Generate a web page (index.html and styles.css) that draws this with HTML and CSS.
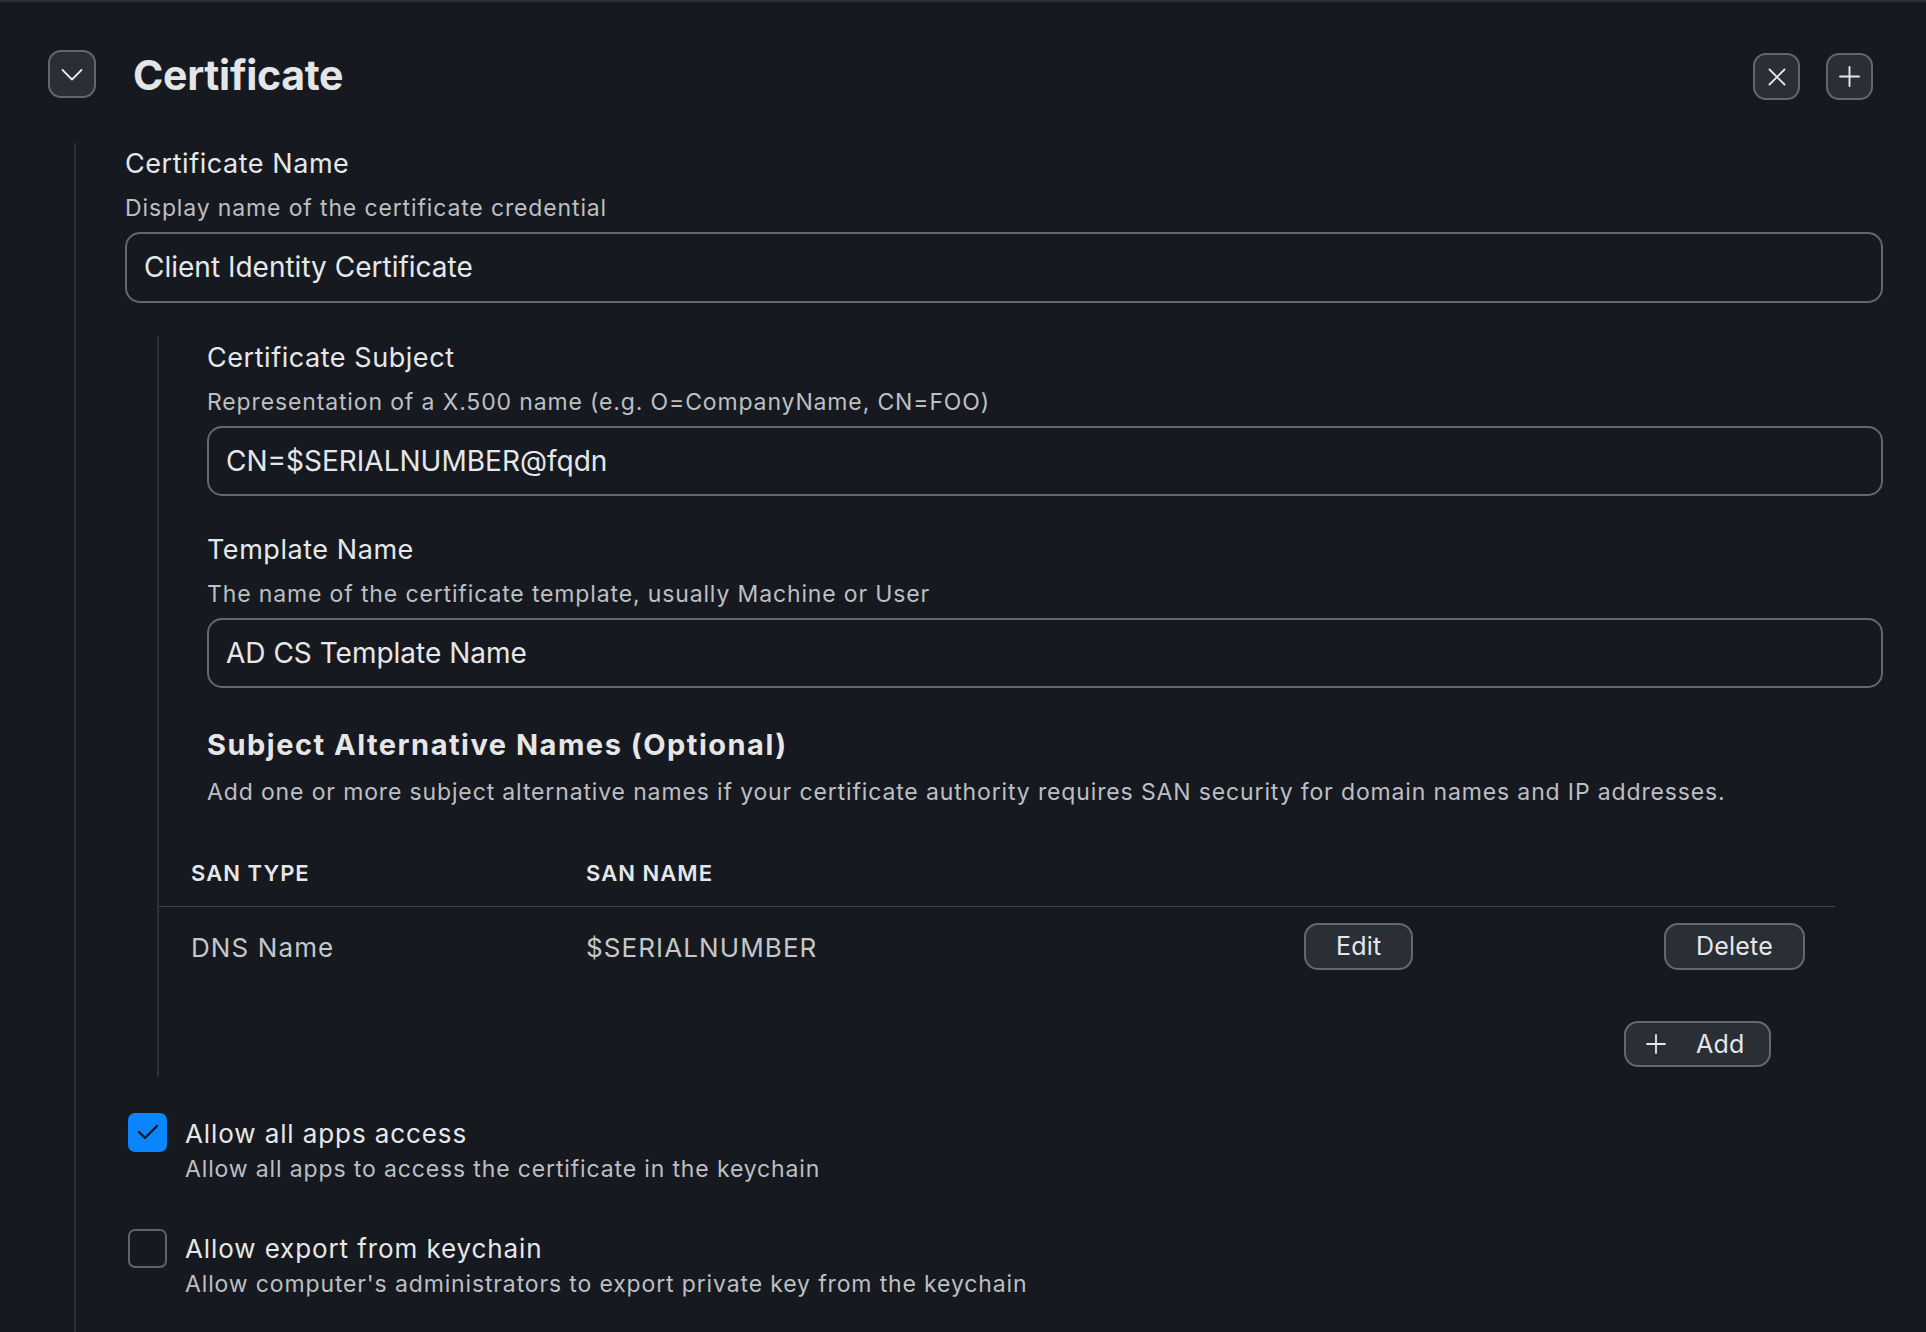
FILE: index.html
```html
<!DOCTYPE html>
<html lang="en">
<head>
<meta charset="utf-8">
<title>Certificate</title>
<link rel="stylesheet" href="styles.css">
</head>
<body>
<div class="panel">
  <header class="head">
    <button class="icon-btn chevron" aria-label="Collapse">
      <svg width="22" height="14" viewBox="0 0 22 14"><path d="M1.5 2 L11 11.5 L20.5 2" fill="none" stroke="#e6e7e9" stroke-width="1.8" stroke-linecap="round" stroke-linejoin="round"/></svg>
    </button>
    <h1 class="title">Certificate</h1>
    <div class="head-actions">
      <button class="icon-btn" aria-label="Remove">
        <svg width="18" height="18" viewBox="0 0 18 18"><path d="M1.5 1.5 L16.5 16.5 M16.5 1.5 L1.5 16.5" fill="none" stroke="#e6e7e9" stroke-width="1.8" stroke-linecap="round"/></svg>
      </button>
      <button class="icon-btn" aria-label="Add">
        <svg width="21" height="21" viewBox="0 0 21 21"><path d="M10.5 1 V20 M1 10.5 H20" fill="none" stroke="#e6e7e9" stroke-width="1.9" stroke-linecap="round"/></svg>
      </button>
    </div>
  </header>

  <div class="body">
    <div class="field">
      <div class="label">Certificate Name</div>
      <div class="desc">Display name of the certificate credential</div>
      <div class="input">Client Identity Certificate</div>
    </div>

    <div class="nested">
      <div class="field">
        <div class="label">Certificate Subject</div>
        <div class="desc">Representation of a X.500 name (e.g. O=CompanyName, CN=FOO)</div>
        <div class="input">CN=$SERIALNUMBER@fqdn</div>
      </div>
      <div class="field next">
        <div class="label">Template Name</div>
        <div class="desc">The name of the certificate template, usually Machine or User</div>
        <div class="input">AD CS Template Name</div>
      </div>

      <h2 class="san-title">Subject Alternative Names (Optional)</h2>
      <div class="desc san-desc">Add one or more subject alternative names if your certificate authority requires SAN security for domain names and IP addresses.</div>

      <div class="table">
        <div class="t-row t-head">
          <div class="cell">SAN TYPE</div>
          <div class="cell">SAN NAME</div>
          <div class="cell"></div>
          <div class="cell"></div>
        </div>
        <div class="t-row t-body">
          <div class="cell">DNS Name</div>
          <div class="cell">$SERIALNUMBER</div>
          <div class="cell"><button class="btn">Edit</button></div>
          <div class="cell"><button class="btn">Delete</button></div>
        </div>
        <div class="add-row">
          <button class="btn add-btn">
            <svg width="20" height="20" viewBox="0 0 20 20"><path d="M10 1 V19 M1 10 H19" fill="none" stroke="#e6e7e9" stroke-width="1.8" stroke-linecap="round"/></svg>
            <span>Add</span>
          </button>
        </div>
      </div>
    </div>

    <div class="check-row">
      <span class="checkbox checked">
        <svg width="22" height="16" viewBox="0 0 22 16"><path d="M2 8 L8 14 L20 2" fill="none" stroke="#15191f" stroke-width="2.4" stroke-linecap="round" stroke-linejoin="round"/></svg>
      </span>
      <div class="check-text">
        <div class="check-title">Allow all apps access</div>
        <div class="desc check-desc">Allow all apps to access the certificate in the keychain</div>
      </div>
    </div>
    <div class="check-row second">
      <span class="checkbox"></span>
      <div class="check-text">
        <div class="check-title">Allow export from keychain</div>
        <div class="desc check-desc">Allow computer's administrators to export private key from the keychain</div>
      </div>
    </div>
  </div>
</div>
</body>
</html>
```

FILE: styles.css
```css
* { box-sizing: border-box; }

html, body {
  margin: 0;
  padding: 0;
  background: #161a20;
  height: 100%;
}

body {
  font-family: Inter, "Noto Sans", "Liberation Sans", sans-serif;
  color: #e6e7e9;
  border-top: 2px solid #2c3037;
  overflow: hidden;
}

button {
  font-family: inherit;
  color: inherit;
  cursor: pointer;
}

.panel {
  padding: 48px 43px 0 48px;
  min-height: 100%;
  display: flex;
  flex-direction: column;
}

.head {
  display: flex;
  align-items: center;
  height: 48px;
}

.icon-btn {
  width: 48px;
  height: 48px;
  border-radius: 13px;
  border: 2px solid #63666b;
  background: #2a2e35;
  display: flex;
  align-items: center;
  justify-content: center;
  padding: 0;
}

.chevron svg { margin-top: 2px; }

.title {
  margin: 0 0 0 37px;
  font-size: 41px;
  font-weight: 700;
  line-height: 48px;
  padding-top: 2px;
  letter-spacing: -0.3px;
  color: #e4e5e7;
  flex: 1;
}

.head-actions {
  display: flex;
  gap: 26px;
  margin-right: 10px;
  margin-top: 5px;
}

.head-actions .icon-btn { width: 47px; height: 47px; }

.body {
  flex: 1;
  margin-top: 45px;
  margin-left: 26px;
  border-left: 2px solid #2b2f36;
  padding-left: 49px;
  padding-top: 4px;
  padding-bottom: 40px;
}

.label {
  font-size: 27px;
  line-height: 33px;
  letter-spacing: 0.55px;
  color: #e6e7e9;
}

.desc {
  font-size: 23px;
  line-height: 28px;
  color: #bdbfc3;
  letter-spacing: 0.86px;
}

.field .desc { margin-top: 13.6px; }

.input {
  margin-top: 10.4px;
  height: 71px;
  border: 2px solid #64676c;
  border-radius: 15px;
  display: flex;
  align-items: center;
  padding-left: 17px;
  font-size: 28px;
  color: #e6e7e9;
}

.field.next { margin-top: 37px; }
.field.next .input, .nested .input { height: 70px; }

.nested {
  margin-top: 33px;
  margin-left: 32px;
  border-left: 2px solid #2b2f36;
  padding-left: 48px;
  padding-top: 5px;
  padding-bottom: 10px;
}

.san-title {
  margin: 39px 0 0;
  font-size: 29px;
  line-height: 35px;
  font-weight: 700;
  letter-spacing: 1.5px;
  color: #e6e6e7;
}

.san-desc { margin-top: 16px; }

.table {
  margin: 35px 48px 0 -48px;
}

.t-row {
  display: grid;
  grid-template-columns: 395px 718px 360px 1fr;
  align-items: center;
}

.cell { padding: 0 32px; }

.t-head {
  border-bottom: 1px solid #43474d;
}

.t-head .cell {
  padding-top: 19px;
  padding-bottom: 19px;
  font-size: 22px;
  line-height: 27px;
  font-weight: 600;
  letter-spacing: 1.05px;
  color: #e6e7e9;
}

.t-body .cell {
  padding-top: 16px;
  padding-bottom: 16px;
  font-size: 26px;
  line-height: 32px;
  letter-spacing: 1.1px;
  color: #c5c7ca;
}

.t-body .cell:nth-child(-n+2) { padding-top: 18px; padding-bottom: 14px; }

.btn {
  height: 47px;
  padding: 0 30px;
  border: 2px solid #65686d;
  border-radius: 14px;
  background: #2a2e35;
  font-size: 25px;
  letter-spacing: 0.2px;
  color: #e6e7e9;
  display: inline-flex;
  align-items: center;
}

.add-row {
  display: flex;
  justify-content: flex-end;
  padding-right: 64px;
  margin-top: 35px;
}

.add-btn {
  width: 147px;
  height: 46px;
  padding: 0 0 0 20px;
  gap: 30px;
}

.check-row {
  display: flex;
  align-items: flex-start;
  margin-top: 36px;
  margin-left: 3px;
}

.check-row.second { margin-top: 46px; }

.checkbox {
  width: 39px;
  height: 39px;
  flex: none;
  border-radius: 7px;
  border: 2px solid #5f6267;
  display: flex;
  align-items: center;
  justify-content: center;
}

.checkbox.checked {
  background: #0a84ff;
  border-color: #0a84ff;
}

.check-text {
  margin-left: 18px;
  padding-top: 5.5px;
}

.check-row.second .check-text { padding-top: 3.5px; }

.check-title {
  font-size: 26px;
  line-height: 32px;
  letter-spacing: 0.9px;
  color: #e6e7e9;
}

.check-desc { margin-top: 5px; }
```
